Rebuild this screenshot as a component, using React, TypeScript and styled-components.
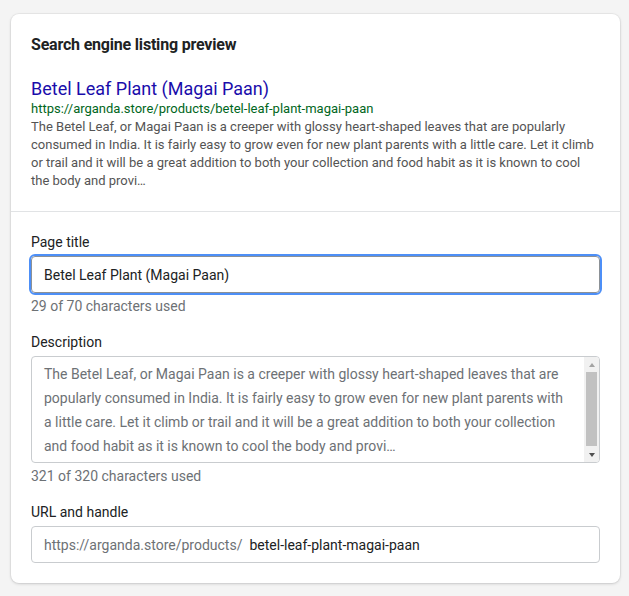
import React, { useState } from "react";
import styled, { createGlobalStyle } from "styled-components";

const GlobalStyle = createGlobalStyle`
  html, body {
    margin: 0;
    padding: 0;
    background: #f4f4f4;
    font-family: Roboto, "Liberation Sans", Arial, sans-serif;
  }
`;

const Page = styled.div`
  padding: 14px 9px 14px 11px;
`;

const Card = styled.div`
  background: #fff;
  border-radius: 8px;
  box-shadow: 0 0 0 1px rgba(63, 63, 68, 0.05), 0 1px 3px rgba(63, 63, 68, 0.2);
  overflow: hidden;
`;

const Section = styled.div<{ $divided?: boolean }>`
  padding: 20px;
  border-top: ${(p) => (p.$divided ? "1px solid #e1e3e5" : "none")};
`;

const Heading = styled.h2`
  margin: 0 0 22px;
  font-size: 16px;
  line-height: 22px;
  font-weight: 700;
  color: #202223;
  letter-spacing: -0.2px;
`;

const PreviewTitle = styled.div`
  font-size: 18px;
  line-height: 22px;
  color: #1a0dab;
`;

const PreviewUrl = styled.div`
  font-size: 13px;
  line-height: 18px;
  color: #006621;
`;

const PreviewText = styled.div`
  font-size: 13px;
  line-height: 18px;
  color: #545454;
  margin-bottom: 1px;
`;

const Field = styled.div`
  display: flex;
  flex-direction: column;
  margin-bottom: 16px;

  &:last-child {
    margin-bottom: 0;
  }
`;

const Label = styled.label`
  font-size: 14px;
  line-height: 20px;
  color: #202223;
  margin-bottom: 4px;
`;

const TextInput = styled.input<{ $focused?: boolean }>`
  box-sizing: border-box;
  height: 37px;
  width: 100%;
  padding: 0 12px;
  font-family: inherit;
  font-size: 14px;
  color: #202223;
  border: 1px solid ${(p) => (p.$focused ? "#8c9196" : "#c9cccf")};
  border-radius: 4px;
  outline: ${(p) => (p.$focused ? "2px solid #4d8ff7" : "none")};
  outline-offset: 0;
  background: #fff;
`;

const AreaBox = styled.div`
  box-sizing: border-box;
  display: flex;
  height: 107px;
  border: 1px solid #c9cccf;
  border-radius: 4px;
  overflow: hidden;
`;

const TextArea = styled.textarea`
  flex: 1;
  box-sizing: border-box;
  height: 100%;
  padding: 5px 12px 0;
  font-family: inherit;
  font-size: 14px;
  line-height: 24px;
  color: #6d7175;
  border: none;
  resize: none;
  overflow: hidden;
  outline: none;
  background: transparent;
`;

const ScrollTrack = styled.div`
  width: 15px;
  display: flex;
  flex-direction: column;
  background: #f1f1f1;
`;

const ScrollButton = styled.div<{ $dir: "up" | "down"; $active?: boolean }>`
  height: 15px;
  display: flex;
  align-items: center;
  justify-content: center;

  &::after {
    content: "";
    width: 0;
    height: 0;
    border-left: 3.5px solid transparent;
    border-right: 3.5px solid transparent;
    ${(p) =>
      p.$dir === "up"
        ? `border-bottom: 4px solid ${p.$active ? "#505050" : "#a3a3a3"};`
        : `border-top: 4px solid ${p.$active ? "#505050" : "#a3a3a3"};`}
  }
`;

const ScrollThumb = styled.div`
  flex: 1;
  margin: 0 2px 1px 2px;
  background: #c1c1c1;
`;

const Help = styled.div`
  font-size: 14px;
  line-height: 20px;
  color: #6d7175;
  margin-top: 3px;
`;

const Prefixed = styled.div`
  box-sizing: border-box;
  display: flex;
  align-items: center;
  height: 37px;
  padding: 0 12px;
  border: 1px solid #c9cccf;
  border-radius: 4px;
  font-size: 14px;
`;

const Prefix = styled.span`
  color: #6d7175;
  margin-right: 7px;
  white-space: nowrap;
`;

const BareInput = styled.input`
  flex: 1;
  border: none;
  outline: none;
  padding: 0;
  font-family: inherit;
  font-size: 14px;
  color: #202223;
  background: transparent;
`;

const description =
  "The Betel Leaf, or Magai Paan is a creeper with glossy heart-shaped leaves that are popularly consumed in India. It is fairly easy to grow even for new plant parents with a little care. Let it climb or trail and it will be a great addition to both your collection and food habit as it is known to cool the body and provi…";

export default function App() {
  const [title, setTitle] = useState("Betel Leaf Plant (Magai Paan)");
  const [desc, setDesc] = useState(description);
  const [handle, setHandle] = useState("betel-leaf-plant-magai-paan");

  return (
    <Page>
      <GlobalStyle />
      <Card>
        <Section>
          <Heading>Search engine listing preview</Heading>
          <PreviewTitle>{title}</PreviewTitle>
          <PreviewUrl>https://arganda.store/products/{handle}</PreviewUrl>
          <PreviewText>{desc}</PreviewText>
        </Section>
        <Section $divided>
          <Field>
            <Label>Page title</Label>
            <TextInput $focused value={title} onChange={(e) => setTitle(e.target.value)} />
            <Help>{title.length} of 70 characters used</Help>
          </Field>
          <Field>
            <Label>Description</Label>
            <AreaBox>
              <TextArea value={desc} onChange={(e) => setDesc(e.target.value)} />
              <ScrollTrack>
                <ScrollButton $dir="up" />
                <ScrollThumb />
                <ScrollButton $dir="down" $active />
              </ScrollTrack>
            </AreaBox>
            <Help>321 of 320 characters used</Help>
          </Field>
          <Field>
            <Label>URL and handle</Label>
            <Prefixed>
              <Prefix>https://arganda.store/products/</Prefix>
              <BareInput value={handle} onChange={(e) => setHandle(e.target.value)} />
            </Prefixed>
          </Field>
        </Section>
      </Card>
    </Page>
  );
}
